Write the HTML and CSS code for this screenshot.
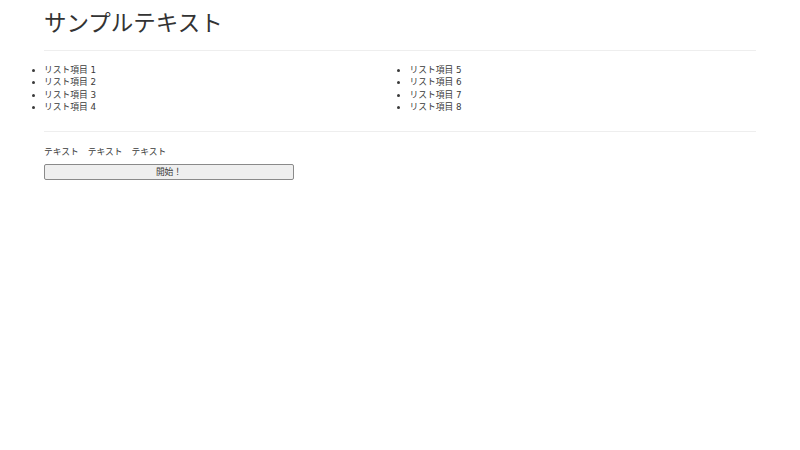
FILE: index.html
```html
<!DOCTYPE html>
<html lang="ja">
<head>
    <meta charset="UTF-8">
    <meta name="viewport" content="width=device-width, initial-scale=1.0">
    <title>サンプル</title>
    <link rel="stylesheet" href="styles.css">
</head>
<body>
    <div class="container">
        <h1>サンプルテキスト</h1>
        <hr>

        <div class="row">
            <div class="col">
                <ul>
                    <li>リスト項目 1</li>
                    <li>リスト項目 2</li>
                    <li>リスト項目 3</li>
                    <li>リスト項目 4</li>
                </ul>
            </div>
            <div class="col">
                <ul>
                    <li>リスト項目 5</li>
                    <li>リスト項目 6</li>
                    <li>リスト項目 7</li>
                    <li>リスト項目 8</li>
                </ul>
            </div>
        </div>

        <hr>

        <div class="labels">
            <span>テキスト</span>
            <span>テキスト</span>
            <span>テキスト</span>
        </div>
        <button class="start-button">開始！</button>
    </div>
</body>
</html>
```

FILE: styles.css
```css
body {
    margin: 0;
    font-family: "DejaVu Sans", "Noto Sans CJK JP", sans-serif;
    font-size: 8.75px;
    line-height: 12.5px;
    color: #3a3a3a;
    background-color: #fff;
}
.container {
    width: 712px;
    margin: 0 auto;
}
h1 {
    font-size: 22.5px;
    font-weight: normal;
    line-height: 25px;
    margin: 11px 0 0;
    color: #333;
}
hr {
    border: 0;
    border-top: 1px solid #eee;
    margin: 14px 0 0;
}
.row {
    display: grid;
    grid-template-columns: 1fr 1fr;
    margin: 0 -9.4px;
}
.col {
    padding: 0 9.4px;
}
ul {
    margin: 12.5px 0 3.5px;
    padding-left: 0;
}
hr + .labels {
    margin-top: 14px;
}
.labels {
    display: flex;
    gap: 9px;
}
.start-button {
    display: block;
    width: 250px;
    height: 16px;
    margin-top: 5px;
    padding: 0;
    font-family: inherit;
    font-size: 8.75px;
    color: #3a3a3a;
    background-color: #efefef;
    border: 1px solid #8a8a8a;
    border-radius: 2px;
}
```
